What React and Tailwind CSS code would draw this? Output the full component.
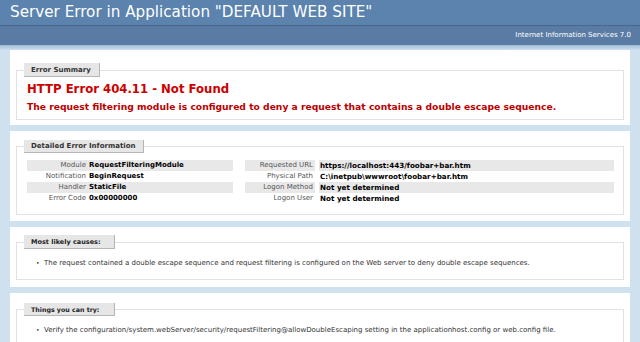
export default function App() {
  const leftRows = [
    ["Module", "RequestFilteringModule", true],
    ["Notification", "BeginRequest", false],
    ["Handler", "StaticFile", true],
    ["Error Code", "0x00000000", false],
  ];
  const rightRows = [
    ["Requested URL", "https://localhost:443/foobar+bar.htm", true],
    ["Physical Path", "C:\\inetpub\\wwwroot\\foobar+bar.htm", false],
    ["Logon Method", "Not yet determined", true],
    ["Logon User", "Not yet determined", false],
  ];

  return (
    <div className="w-[640px] h-[342px] overflow-hidden bg-[#cfe0ef] font-['DejaVu_Sans',Verdana,sans-serif]">
      {/* Header */}
      <div className="h-[25px] bg-[#5b83ae] pl-[10px] text-white text-[15.2px] leading-[25px]">
        Server Error in Application "DEFAULT WEB SITE"
      </div>
      <div className="h-px bg-[#46688f]"></div>
      <div className="h-[19px] bg-[#5a7ca4] pr-[9px] text-right text-white text-[7px] leading-[19px]">
        Internet Information Services 7.0
      </div>
      <div className="h-[5px] bg-gradient-to-b from-[#9fbad6] to-[#cfe0ef]"></div>

      <div className="flex flex-col gap-[6px] px-[10px]">
        {/* Error summary */}
        <div className="bg-white px-[6px] pt-[13px] pb-[5px]">
          <fieldset className="border border-[#e2e2e2] pl-[10px] pr-[10px] pb-[5px]">
            <legend className="ml-[-3px] w-[76px] bg-[#e6e6e6] border-r border-b border-[#b5b5b5] pl-[7px] h-[14px] text-[7px] leading-[14px] font-bold text-[#333]">
              Error Summary
            </legend>
            <h2 className="mt-[5px] text-[11.7px] leading-[15px] font-bold text-[#c00]">
              HTTP Error 404.11 - Not Found
            </h2>
            <h3 className="mt-[3px] text-[9.2px] leading-[14px] font-bold text-[#b00]">
              The request filtering module is configured to deny a request that contains a double escape sequence.
            </h3>
          </fieldset>
        </div>

        {/* Detailed info */}
        <div className="bg-white px-[6px] pt-[9px] pb-[6px]">
          <fieldset className="border border-[#e2e2e2] pl-[10px] pr-[9px] pb-[10px]">
            <legend className="ml-[-3px] w-[120px] bg-[#e6e6e6] border-r border-b border-[#b5b5b5] pl-[7px] h-[13px] text-[7px] leading-[13px] font-bold text-[#333]">
              Detailed Error Information
            </legend>
            <div className="mt-[7px] flex gap-[12px] text-[7px] leading-[11px]">
              <div className="w-[206px] flex flex-col">
                {leftRows.map(([k, v, alt]) => (
                  <div key={k} className={"flex h-[11px] " + (alt ? "bg-[#e8e8e8]" : "")}>
                    <span className="w-[59px] text-right text-[#555]">{k}</span>
                    <span className="pl-[3px] font-bold text-black">{v}</span>
                  </div>
                ))}
              </div>
              <div className="flex-1 flex flex-col">
                {rightRows.map(([k, v, alt]) => (
                  <div key={k} className="flex h-[11px] gap-[4px]">
                    <span className={"w-[70px] pr-[2px] text-right text-[#555] " + (alt ? "bg-[#e8e8e8]" : "")}>{k}</span>
                    <span className={"flex-1 pl-[1px] text-[7.2px] font-bold text-black " + (alt ? "bg-[#e8e8e8]" : "")}>{v}</span>
                  </div>
                ))}
              </div>
            </div>
          </fieldset>
        </div>

        {/* Causes */}
        <div className="bg-white px-[6px] pt-[8px] pb-[7px]">
          <fieldset className="border border-[#e2e2e2] pl-[10px] pr-[10px] pb-[10px]">
            <legend className="ml-[-3px] w-[91px] bg-[#e6e6e6] border-r border-b border-[#b5b5b5] pl-[7px] h-[14px] text-[6.5px] leading-[14px] font-bold text-[#222]">
              Most likely causes:
            </legend>
            <div className="mt-[8px] flex items-center text-[7px] leading-[12px] text-[#333]">
              <span className="pl-[9px] w-[17px] text-[6px]">•</span>
              <span>The request contained a double escape sequence and request filtering is configured on the Web server to deny double escape sequences.</span>
            </div>
          </fieldset>
        </div>

        {/* Things to try */}
        <div className="bg-white px-[6px] pt-[10px] pb-[7px]">
          <fieldset className="border border-[#e2e2e2] pl-[10px] pr-[10px] pb-[10px]">
            <legend className="ml-[-3px] w-[91px] bg-[#e6e6e6] border-r border-b border-[#b5b5b5] pl-[7px] h-[13px] text-[6.3px] leading-[13px] font-bold text-[#222]">
              Things you can try:
            </legend>
            <div className="mt-[8px] flex items-center text-[7px] leading-[12px] text-[#333]">
              <span className="pl-[9px] w-[17px] text-[6px]">•</span>
              <span>Verify the configuration/system.webServer/security/requestFiltering@allowDoubleEscaping setting in the applicationhost.config or web.config file.</span>
            </div>
          </fieldset>
        </div>
      </div>
    </div>
  );
}
